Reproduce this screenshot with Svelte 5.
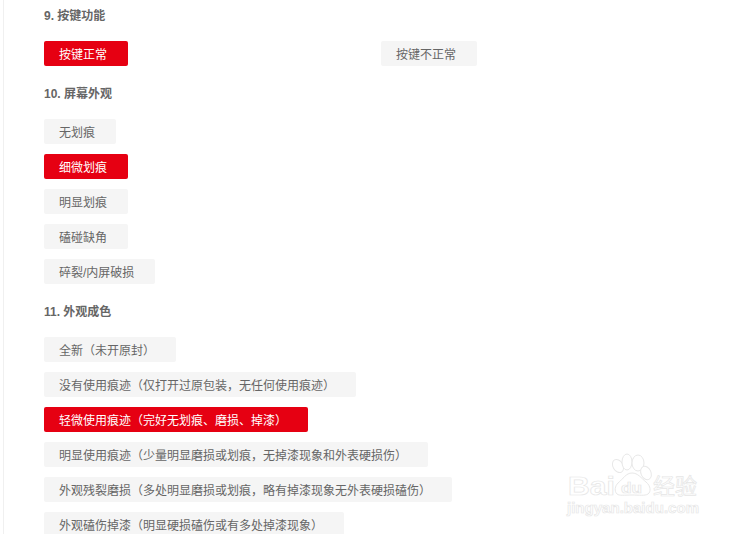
<script>
  const sections = [
    { title: '9. 按键功能', rows: [[{ t: '按键正常', on: true, w: 84 }, { t: '按键不正常' }]] },
    { title: '10. 屏幕外观', rows: [[{ t: '无划痕' }], [{ t: '细微划痕', on: true, w: 84 }], [{ t: '明显划痕' }], [{ t: '磕碰缺角' }], [{ t: '碎裂/内屏破损' }]] },
    { title: '11. 外观成色', rows: [
      [{ t: '全新（未开原封）' }],
      [{ t: '没有使用痕迹（仅打开过原包装，无任何使用痕迹）' }],
      [{ t: '轻微使用痕迹（完好无划痕、磨损、掉漆）', on: true }],
      [{ t: '明显使用痕迹（少量明显磨损或划痕，无掉漆现象和外表硬损伤）' }],
      [{ t: '外观残裂磨损（多处明显磨损或划痕，略有掉漆现象无外表硬损磕伤）' }],
      [{ t: '外观磕伤掉漆（明显硬损磕伤或有多处掉漆现象）' }]
    ] }
  ];
</script>

<div class="page">
  {#each sections as s}
    <section>
      <h3>{s.title}</h3>
      <div class="rows">
        {#each s.rows as row}
          <div class="row">
            {#each row as b}
              <span class="cell"><span class="btn" class:on={b.on}>{b.t}</span></span>
            {/each}
          </div>
        {/each}
      </div>
    </section>
  {/each}

  <svg class="mark" viewBox="0 0 199 104" width="199" height="104" aria-label="Baidu 经验">
    <g fill="#fff" stroke="#e8e8e8" stroke-width="1">
      <ellipse cx="78" cy="36" rx="5" ry="7" transform="rotate(-30 78 36)" />
      <ellipse cx="87" cy="32" rx="5" ry="8" />
      <ellipse cx="98" cy="33" rx="6" ry="8" />
      <ellipse cx="106" cy="43" rx="5" ry="7" transform="rotate(-25 106 43)" />
      <path d="M92 43c6 0 9 5 14 9 5 4 5 10 2 12-3 2-9 1-16 1s-13 1-15-1c-3-3-2-8 1-11 5-4 8-10 14-10z" />
    </g>
    <g class="txt">
      <text x="28" y="65" font-size="26" textLength="47" lengthAdjust="spacingAndGlyphs">Bai</text>
      <text x="81" y="63" font-size="14" textLength="21" lengthAdjust="spacingAndGlyphs">du</text>
      <text x="113" y="64" font-size="22" class="cjk">经验</text>
      <text x="27" y="83" font-size="15" textLength="132" lengthAdjust="spacingAndGlyphs">jingyan.baidu.com</text>
    </g>
  </svg>
</div>

<style>
  :global(body) {
    margin: 0;
    background: #fff;
  }
  .page {
    position: relative;
    box-sizing: border-box;
    height: 534px;
    margin-left: 3px;
    padding: 6px 0 0 40px;
    border-left: 1px solid #f0f0f0;
    overflow: hidden;
    font-family: "Liberation Sans", "Noto Sans CJK SC", sans-serif;
    font-size: 12px;
    color: #666;
  }
  section {
    margin-bottom: 18px;
  }
  h3 {
    margin: 0 0 15px;
    font-size: 12px;
    line-height: 20px;
    font-weight: 700;
  }
  .rows {
    display: flex;
    flex-direction: column;
    gap: 10px;
  }
  .row {
    display: flex;
  }
  .cell {
    width: 337px;
    flex: none;
    white-space: nowrap;
  }
  .btn {
    display: inline-block;
    height: 25px;
    line-height: 29px;
    padding: 0 21px 0 15px;
    background: #f5f5f5;
    border-radius: 2px;
    vertical-align: top;
  }
  .btn.on {
    background: #e60012;
    color: #fff;
  }
  .mark {
    position: absolute;
    left: 536px;
    top: 430px;
  }
  .txt text {
    fill: #fff;
    stroke: #e6e6e6;
    stroke-width: 0.7;
    font-family: "Liberation Sans", sans-serif;
    font-weight: 700;
  }
  .txt text.cjk {
    font-family: "Noto Sans CJK SC", sans-serif;
    font-weight: 400;
  }
</style>
